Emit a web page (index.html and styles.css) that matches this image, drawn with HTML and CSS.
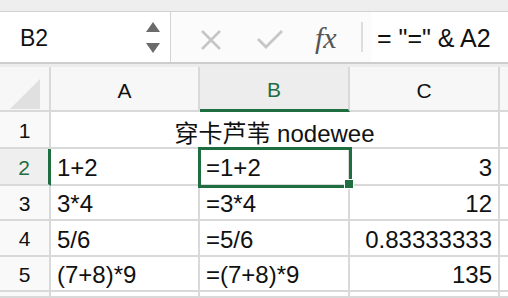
FILE: index.html
```html
<!DOCTYPE html>
<html lang="en">
<head>
    <meta charset="UTF-8">
    <meta name="viewport" content="width=device-width, initial-scale=1.0">
    <title>Sheet</title>
    <link rel="stylesheet" href="styles.css">
</head>
<body>
    <div class="toolbar"></div>
    <div class="formula-bar">
        <div class="name-box">
            <span class="cell-ref">B2</span>
            <span class="spinner">
                <span class="arrow-up"></span>
                <span class="arrow-down"></span>
            </span>
        </div>
        <svg class="btn-cancel" width="22" height="22" viewBox="0 0 22 22">
            <path d="M2 2 L20 20 M20 2 L2 20" stroke="#c6c6c6" stroke-width="2.6" fill="none"/>
        </svg>
        <svg class="btn-confirm" width="28" height="22" viewBox="0 0 28 22">
            <path d="M2 11 L10 19 L26 3" stroke="#c6c6c6" stroke-width="2.8" fill="none"/>
        </svg>
        <span class="fx">fx</span>
        <span class="separator"></span>
        <div class="formula-input">= "=" &amp; A2</div>
    </div>
    <div class="gap"></div>

    <div class="sheet">
        <div class="corner"><span class="triangle"></span></div>
        <div class="col-head">A</div>
        <div class="col-head selected">B</div>
        <div class="col-head">C</div>
        <div class="col-head"></div>

        <div class="row-head">1</div>
        <div class="cell merged">穿卡芦苇 nodewee</div>
        <div class="cell"></div>

        <div class="row-head selected">2</div>
        <div class="cell">1+2</div>
        <div class="cell active">=1+2</div>
        <div class="cell num">3</div>
        <div class="cell"></div>

        <div class="row-head">3</div>
        <div class="cell">3*4</div>
        <div class="cell">=3*4</div>
        <div class="cell num">12</div>
        <div class="cell"></div>

        <div class="row-head">4</div>
        <div class="cell">5/6</div>
        <div class="cell">=5/6</div>
        <div class="cell num">0.83333333</div>
        <div class="cell"></div>

        <div class="row-head">5</div>
        <div class="cell">(7+8)*9</div>
        <div class="cell">=(7+8)*9</div>
        <div class="cell num">135</div>
        <div class="cell"></div>

        <div class="row-head"></div>
        <div class="cell"></div>
        <div class="cell"></div>
        <div class="cell"></div>
        <div class="cell"></div>
    </div>
</body>
</html>
```

FILE: styles.css
```css
body {
    margin: 0;
    width: 508px;
    height: 298px;
    overflow: hidden;
    background: #ffffff;
    font-family: "Liberation Sans", Arial, sans-serif;
    color: #111111;
}
.toolbar {
    height: 11px;
    background: #eeeeee;
    border-bottom: 1px solid #d2d2d2;
}
.formula-bar {
    display: flex;
    align-items: center;
    height: 50px;
    background: #fbfbfb;
    border-bottom: 2px solid #cdcdcd;
}
.name-box {
    display: flex;
    align-items: center;
    width: 170px;
    height: 100%;
    background: #ffffff;
    border-right: 1px solid #d4d4d4;
}
.cell-ref {
    margin-left: 20px;
    font-size: 23px;
    flex: 1;
    padding-top: 2px;
}
.spinner {
    display: flex;
    flex-direction: column;
    gap: 11px;
    margin-right: 10px;
}
.arrow-up, .arrow-down {
    width: 0;
    height: 0;
    border-left: 7px solid transparent;
    border-right: 7px solid transparent;
}
.arrow-up {
    border-bottom: 10px solid #6b6b6b;
}
.arrow-down {
    border-top: 10px solid #6b6b6b;
}
.btn-cancel {
    margin-left: 29px;
    margin-top: 6px;
}
.btn-confirm {
    margin-left: 34px;
    margin-top: 4px;
}
.fx {
    margin-left: 31px;
    font-family: "Liberation Serif", serif;
    font-style: italic;
    font-size: 30px;
    color: #555555;
    width: 30px;
    padding-top: 2px;
}
.separator {
    margin-left: 16px;
    width: 2px;
    height: 30px;
    background: #dddddd;
}
.formula-input {
    flex: 1;
    margin-left: 8px;
    padding-left: 6px;
    height: 100%;
    display: flex;
    align-items: center;
    background: #ffffff;
    font-size: 25px;
    padding-top: 2px;
    box-sizing: border-box;
}
.gap {
    height: 3px;
    background: #ececec;
}
.sheet {
    display: grid;
    grid-template-columns: 51px 149px 150px 150px 1fr;
    grid-template-rows: 45px 37px 37px 35px 36px 35px 1fr;
    height: 231px;
}
.sheet > div {
    box-sizing: border-box;
    border-right: 2px solid #d9d9d9;
    border-bottom: 2px solid #d9d9d9;
    display: flex;
    align-items: center;
    min-width: 0;
    white-space: nowrap;
}
.corner {
    background: #f7f7f7;
    justify-content: center;
}
.triangle {
    width: 0;
    height: 0;
    margin-top: 10px;
    border-left: 30px solid transparent;
    border-bottom: 30px solid #e0e0e0;
}
.col-head {
    background: #f7f7f7;
    justify-content: center;
    font-size: 21px;
    padding-top: 4px;
}
.col-head.selected {
    background: #ededed;
    color: #1e6e42;
    border-bottom: 3px solid #1e6e42 !important;
}
.row-head {
    background: #f9f9f9;
    justify-content: center;
    font-size: 21px;
    padding-top: 2px;
}
.row-head.selected {
    background: #efefef;
    color: #1e6e42;
    border-right: 3px solid #1e6e42 !important;
}
.cell {
    padding: 3px 6px 0 6px;
    font-size: 24px;
}
.cell.merged {
    grid-column: span 3;
    justify-content: center;
    font-family: "Liberation Sans", "Noto Sans CJK SC", sans-serif;
    font-size: 24px;
}
.cell.num {
    justify-content: flex-end;
}
.cell.active {
    position: relative;
    outline: 3px solid #1e6e42;
    outline-offset: -1px;
}
.cell.active::after {
    content: "";
    position: absolute;
    right: -6px;
    bottom: -5px;
    width: 8px;
    height: 8px;
    background: #1e6e42;
    border: 1px solid #ffffff;
}
```
